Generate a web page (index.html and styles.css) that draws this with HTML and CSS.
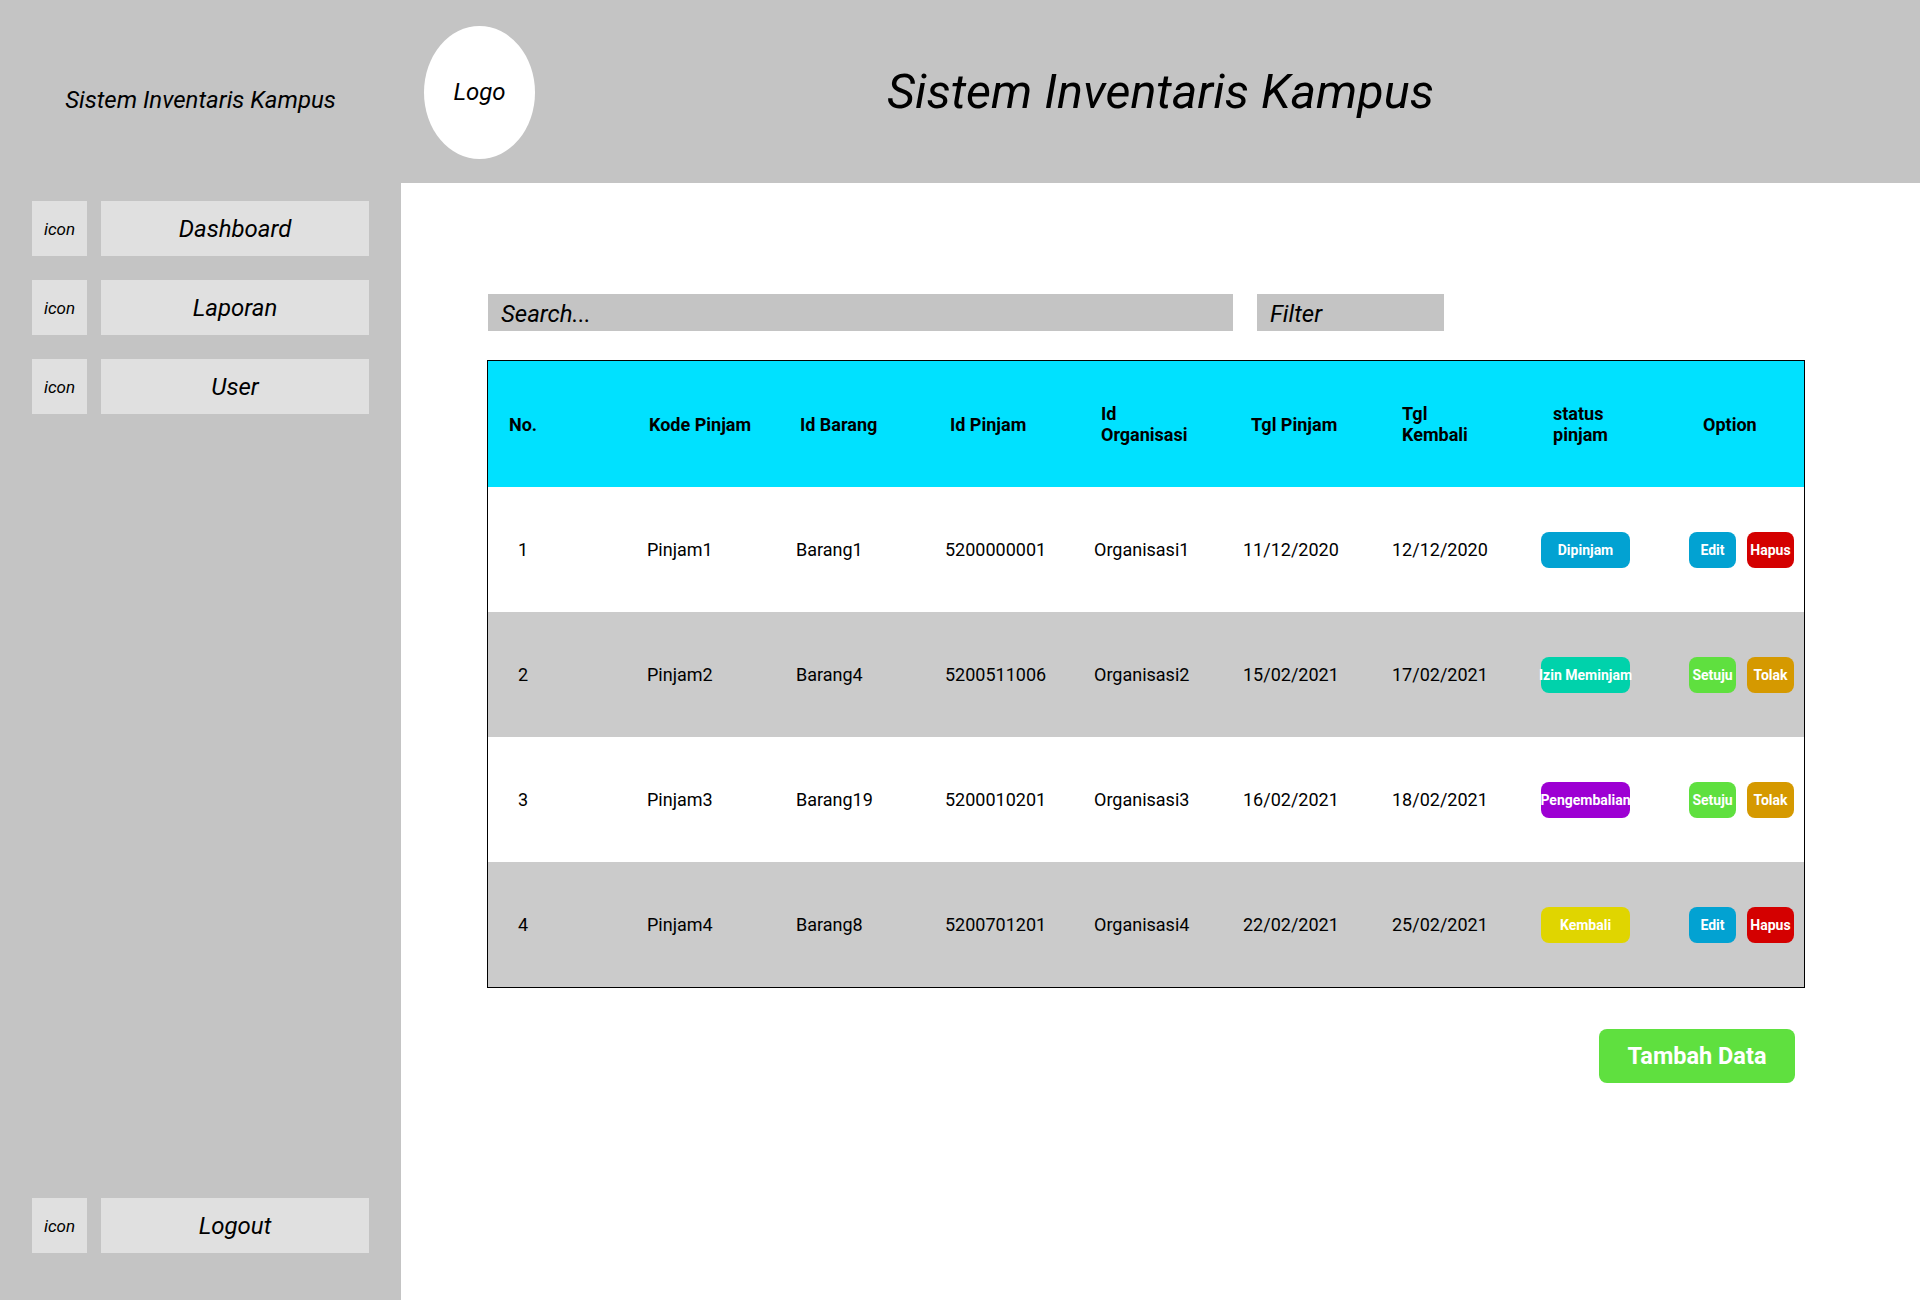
FILE: index.html
```html
<!DOCTYPE html>
<html lang="id">
<head>
<meta charset="utf-8">
<title>Sistem Inventaris Kampus</title>
<link rel="stylesheet" href="styles.css">
</head>
<body>
<div class="app">
  <header class="topbar">
    <div class="brand">Sistem Inventaris Kampus</div>
    <div class="topbar-main">
      <div class="logo">Logo</div>
      <h1 class="page-title">Sistem Inventaris Kampus</h1>
      <div></div>
    </div>
  </header>
  <div class="body">
    <aside class="sidebar">
      <nav class="nav">
        <div class="nav-item"><span class="nav-icon">icon</span><span class="nav-label">Dashboard</span></div>
        <div class="nav-item"><span class="nav-icon">icon</span><span class="nav-label">Laporan</span></div>
        <div class="nav-item"><span class="nav-icon">icon</span><span class="nav-label">User</span></div>
      </nav>
      <div class="nav-item"><span class="nav-icon">icon</span><span class="nav-label">Logout</span></div>
    </aside>
    <main class="content">
      <div class="toolbar">
        <div class="search">Search...</div>
        <div class="filter">Filter</div>
      </div>
      <div class="table">
        <div class="thead">
          <div>No.</div>
          <div>Kode Pinjam</div>
          <div>Id Barang</div>
          <div>Id Pinjam</div>
          <div>Id<br>Organisasi</div>
          <div>Tgl Pinjam</div>
          <div>Tgl<br>Kembali</div>
          <div>status<br>pinjam</div>
          <div>Option</div>
        </div>
        <div class="row">
          <div>1</div><div>Pinjam1</div><div>Barang1</div><div>5200000001</div><div>Organisasi1</div><div>11/12/2020</div><div>12/12/2020</div>
          <div><span class="badge status blue">Dipinjam</span></div>
          <div class="actions"><span class="badge btn blue">Edit</span><span class="badge btn red">Hapus</span></div>
        </div>
        <div class="row alt">
          <div>2</div><div>Pinjam2</div><div>Barang4</div><div>5200511006</div><div>Organisasi2</div><div>15/02/2021</div><div>17/02/2021</div>
          <div><span class="badge status teal">Izin Meminjam</span></div>
          <div class="actions"><span class="badge btn green">Setuju</span><span class="badge btn orange">Tolak</span></div>
        </div>
        <div class="row">
          <div>3</div><div>Pinjam3</div><div>Barang19</div><div>5200010201</div><div>Organisasi3</div><div>16/02/2021</div><div>18/02/2021</div>
          <div><span class="badge status purple">Pengembalian</span></div>
          <div class="actions"><span class="badge btn green">Setuju</span><span class="badge btn orange">Tolak</span></div>
        </div>
        <div class="row alt">
          <div>4</div><div>Pinjam4</div><div>Barang8</div><div>5200701201</div><div>Organisasi4</div><div>22/02/2021</div><div>25/02/2021</div>
          <div><span class="badge status yellow">Kembali</span></div>
          <div class="actions"><span class="badge btn blue">Edit</span><span class="badge btn red">Hapus</span></div>
        </div>
      </div>
      <div class="footer-actions">
        <button class="add-btn">Tambah Data</button>
      </div>
    </main>
  </div>
</div>
</body>
</html>
```

FILE: styles.css
```css
* { box-sizing: border-box; }
html, body { margin: 0; padding: 0; }
body {
  font-family: Roboto, "Liberation Sans", sans-serif;
  color: #000;
  background: #fff;
}
.app {
  width: 1920px;
  height: 1300px;
  display: flex;
  flex-direction: column;
}
.topbar {
  height: 183px;
  background: #c4c4c4;
  display: grid;
  grid-template-columns: 401px 1fr;
}
.brand {
  display: flex;
  align-items: center;
  justify-content: center;
  padding-top: 17px;
  font-style: italic;
  font-size: 24px;
}
.topbar-main {
  display: grid;
  grid-template-columns: 1fr auto 1fr;
  align-items: center;
}
.logo {
  justify-self: start;
  margin-left: 23px;
  margin-top: 1px;
  width: 111px;
  height: 133px;
  border-radius: 50%;
  background: #fff;
  display: flex;
  align-items: center;
  justify-content: center;
  font-style: italic;
  font-size: 24px;
}
.page-title {
  margin: 0;
  font-weight: 400;
  font-style: italic;
  font-size: 48.5px;
}
.body {
  flex: 1;
  display: flex;
}
.sidebar {
  width: 401px;
  background: #c4c4c4;
  display: flex;
  flex-direction: column;
  justify-content: space-between;
  padding: 18px 0 47px 32px;
}
.nav {
  display: flex;
  flex-direction: column;
  gap: 24px;
}
.nav-item {
  display: flex;
  gap: 14px;
  height: 55px;
}
.nav-icon {
  width: 55px;
  background: #e0e0e0;
  display: flex;
  align-items: center;
  justify-content: center;
  font-style: italic;
  font-size: 17px;
}
.nav-label {
  width: 268px;
  background: #e0e0e0;
  display: flex;
  align-items: center;
  justify-content: center;
  font-style: italic;
  font-size: 24px;
}
.content {
  flex: 1;
  padding: 111px 0 0 86px;
}
.toolbar {
  display: flex;
  gap: 24px;
  margin-left: 1px;
}
.search, .filter {
  height: 37px;
  background: #c4c4c4;
  font-style: italic;
  font-size: 24px;
  display: flex;
  align-items: center;
  padding: 2px 0 0 13px;
}
.search { width: 745px; }
.filter { width: 187px; }
.table {
  margin-top: 29px;
  width: 1318px;
  border: 1px solid #000;
}
.thead, .row {
  display: grid;
  height: 125px;
  align-items: center;
  font-size: 18px;
}
.thead {
  background: #00e1ff;
  font-weight: 700;
  line-height: 21px;
  padding-left: 21px;
  grid-template-columns: 140px 151px 150px 151px 150px 151px 151px 150px 1fr;
  height: 126px;
}
.row {
  padding-left: 30px;
  grid-template-columns: 129px 149px 149px 149px 149px 149px 149px 148px 1fr;
  background: #fff;
}
.row.alt { background: #cbcbcb; }
.actions {
  display: flex;
  gap: 11px;
}
.badge {
  display: inline-flex;
  align-items: center;
  justify-content: center;
  height: 36px;
  border-radius: 8px;
  color: #fff;
  font-weight: 700;
  font-size: 14px;
  white-space: nowrap;
}
.status { width: 89px; }
.btn { width: 47px; }
.blue { background: #02a2d2; }
.red { background: #d40000; }
.teal { background: #00d2ab; }
.green { background: #5fe03f; }
.orange { background: #d59900; }
.purple { background: #9d00d3; }
.yellow { background: #e0d500; }
.footer-actions {
  width: 1318px;
  display: flex;
  justify-content: flex-end;
  padding-right: 10px;
  margin-top: 41px;
}
.add-btn {
  width: 196px;
  height: 54px;
  border: 0;
  border-radius: 8px;
  background: #5fe03f;
  color: #fff;
  font-family: Roboto, "Liberation Sans", sans-serif;
  font-weight: 700;
  font-size: 23.5px;
  padding: 0;
}
```
